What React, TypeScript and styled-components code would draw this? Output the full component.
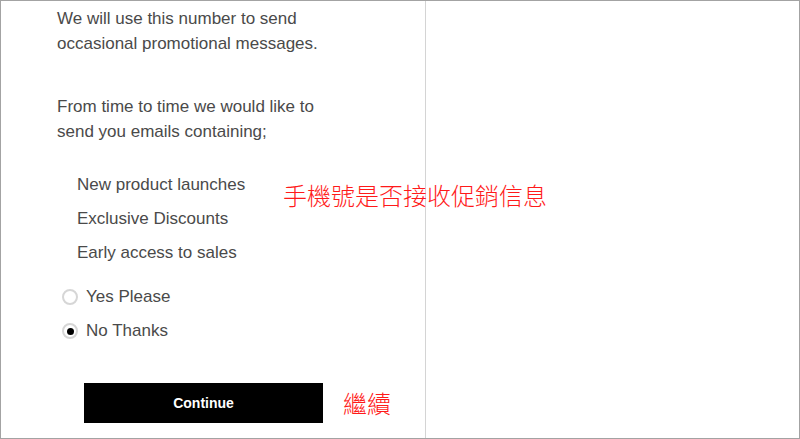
import styled, { createGlobalStyle } from "styled-components";

const GlobalStyle = createGlobalStyle`
  html, body {
    margin: 0;
    padding: 0;
    background: #ffffff;
  }
  * {
    box-sizing: border-box;
  }
`;

const Frame = styled.div`
  position: relative;
  width: 800px;
  height: 439px;
  border: 1px solid #a3a3a3;
  display: grid;
  grid-template-columns: 425px 1fr;
  overflow: hidden;
  font-family: "Liberation Sans", Arial, sans-serif;
  color: #4a4a4a;
`;

const LeftPane = styled.div`
  border-right: 1px solid #d4d4d4;
  padding: 5px 0 0 56px;
`;

const RightPane = styled.div``;

const Paragraph = styled.p<{ $gap?: number }>`
  margin: 0 0 ${(p) => p.$gap ?? 0}px;
  font-size: 17px;
  line-height: 25px;
`;

const List = styled.ul`
  list-style: none;
  margin: 0;
  padding: 0 0 0 20px;
`;

const ListItem = styled.li`
  font-size: 17px;
  line-height: 34px;
`;

const RadioGroup = styled.div`
  margin-top: 10px;
  padding-left: 5px;
`;

const RadioRow = styled.label`
  display: flex;
  align-items: center;
  gap: 8px;
  height: 34px;
  font-size: 17px;
`;

const RadioCircle = styled.span<{ $checked?: boolean }>`
  width: 16px;
  height: 16px;
  border-radius: 50%;
  border: 2px solid #d6d6d6;
  background: #fff;
  display: flex;
  align-items: center;
  justify-content: center;
  &::after {
    content: "";
    display: ${(p) => (p.$checked ? "block" : "none")};
    width: 7px;
    height: 7px;
    border-radius: 50%;
    background: #000;
  }
`;

const ContinueButton = styled.button`
  display: block;
  margin: 35px 0 0 27px;
  width: 239px;
  height: 40px;
  border: none;
  background: #000;
  color: #fff;
  font-family: "Liberation Sans", Arial, sans-serif;
  font-weight: bold;
  font-size: 14px;
  cursor: pointer;
`;

const Note = styled.span<{ $left: number; $top: number }>`
  position: absolute;
  left: ${(p) => p.$left}px;
  top: ${(p) => p.$top}px;
  color: #ff1a1a;
  font-family: "Noto Sans CJK TC", "Noto Sans CJK SC", sans-serif;
  font-size: 24px;
  line-height: 28px;
  white-space: nowrap;
  font-weight: 300;
`;

const App: React.FC = () => {
  return (
    <>
      <GlobalStyle />
      <Frame>
        <LeftPane>
          <Paragraph $gap={38}>
            We will use this number to send
            <br />
            occasional promotional messages.
          </Paragraph>
          <Paragraph $gap={24}>
            From time to time we would like to
            <br />
            send you emails containing;
          </Paragraph>
          <List>
            <ListItem>New product launches</ListItem>
            <ListItem>Exclusive Discounts</ListItem>
            <ListItem>Early access to sales</ListItem>
          </List>
          <RadioGroup>
            <RadioRow>
              <RadioCircle />
              Yes Please
            </RadioRow>
            <RadioRow>
              <RadioCircle $checked />
              No Thanks
            </RadioRow>
          </RadioGroup>
          <ContinueButton>Continue</ContinueButton>
        </LeftPane>
        <RightPane />
        <Note $left={282} $top={180}>手機號是否接收促銷信息</Note>
        <Note $left={342} $top={388}>繼續</Note>
      </Frame>
    </>
  );
};

export default App;
